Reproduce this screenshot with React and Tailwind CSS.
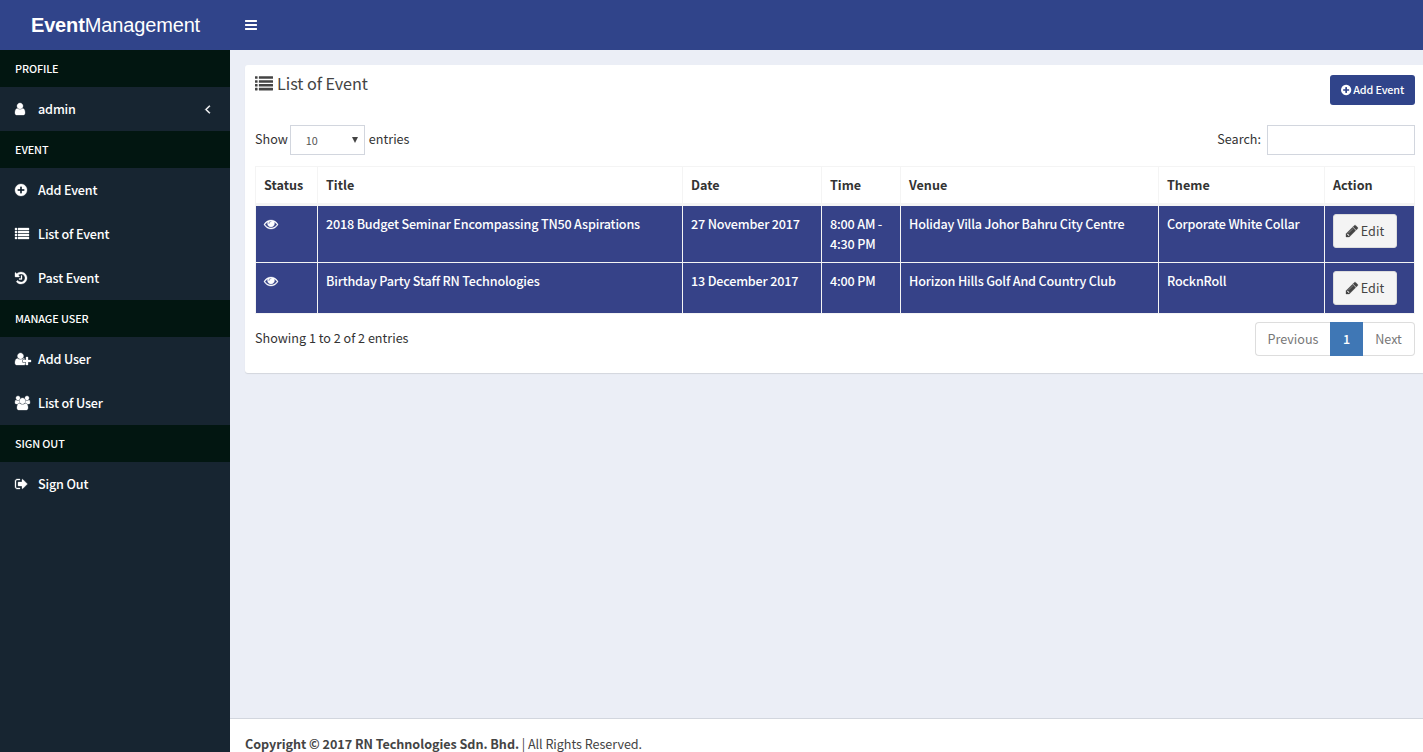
const GLYPHS = {
  user: { w: 1280, d: 'M1280 137q0 -109 -62.5 -187t-150.5 -78h-854q-88 0 -150.5 78t-62.5 187q0 85 8.5 160.5t31.5 152t58.5 131t94 89t134.5 34.5q131 -128 313 -128t313 128q76 0 134.5 -34.5t94 -89t58.5 -131t31.5 -152t8.5 -160.5zM1024 1024q0 -159 -112.5 -271.5t-271.5 -112.5t-271.5 112.5t-112.5 271.5t112.5 271.5t271.5 112.5t271.5 -112.5t112.5 -271.5z' },
  list: { w: 1792, d: 'M32 0h192q32 0 32 32v192q0 32 -32 32h-192q-32 0 -32 -32v-192q0 -32 32 -32zM32 384h192q32 0 32 32v192q0 32 -32 32h-192q-32 0 -32 -32v-192q0 -32 32 -32zM32 768h192q32 0 32 32v192q0 32 -32 32h-192q-32 0 -32 -32v-192q0 -32 32 -32zM32 1152h192q32 0 32 32v192q0 32 -32 32h-192q-32 0 -32 -32v-192q0 -32 32 -32zM416 0h1344q32 0 32 32v192q0 32 -32 32h-1344q-32 0 -32 -32v-192q0 -32 32 -32zM416 384h1344q32 0 32 32v192q0 32 -32 32h-1344q-32 0 -32 -32v-192q0 -32 32 -32zM416 768h1344q32 0 32 32v192q0 32 -32 32h-1344q-32 0 -32 -32v-192q0 -32 32 -32zM416 1152h1344q32 0 32 32v192q0 32 -32 32h-1344q-32 0 -32 -32v-192q0 -32 32 -32z' },
  plusCircle: { w: 1536, d: 'M1216 576v128q0 26 -19 45t-45 19h-256v256q0 26 -19 45t-45 19h-128q-26 0 -45 -19t-19 -45v-256h-256q-26 0 -45 -19t-19 -45v-128q0 -26 19 -45t45 -19h256v-256q0 -26 19 -45t45 -19h128q26 0 45 19t19 45v256h256q26 0 45 19t19 45zM1536 640q0 -209 -103 -385.5t-279.5 -279.5t-385.5 -103t-385.5 103t-279.5 279.5t-103 385.5t103 385.5t279.5 279.5t385.5 103t385.5 -103t279.5 -279.5t103 -385.5z' },
  history: { w: 1536, d: 'M1536 640q0 -156 -61 -298t-164 -245t-245 -164t-298 -61q-172 0 -327 72.5t-264 204.5q-7 10 -6.5 22.5t8.5 20.5l137 138q10 9 25 9q16 -2 23 -12q73 -95 179 -147t225 -52q104 0 198.5 40.5t163.5 109.5t109.5 163.5t40.5 198.5t-40.5 198.5t-109.5 163.5t-163.5 109.5t-198.5 40.5q-98 0 -188 -35.5t-160 -101.5l137 -138q31 -30 14 -69q-17 -40 -59 -40h-448q-26 0 -45 19t-19 45v448q0 42 40 59q39 17 69 -14l130 -129q107 101 244.5 156.5t284.5 55.5q156 0 298 -61t245 -164t164 -245t61 -298zM896 928v-448q0 -14 -9 -23t-23 -9h-320q-14 0 -23 9t-9 23v64q0 14 9 23t23 9h224v352q0 14 9 23t23 9h64q14 0 23 -9t9 -23z' },
  userPlus: { w: 2048, d: 'M704 640q-159 0 -271.5 112.5t-112.5 271.5t112.5 271.5t271.5 112.5t271.5 -112.5t112.5 -271.5t-112.5 -271.5t-271.5 -112.5zM1664 512h352q13 0 22.5 -9.5t9.5 -22.5v-192q0 -13 -9.5 -22.5t-22.5 -9.5h-352v-352q0 -13 -9.5 -22.5t-22.5 -9.5h-192q-13 0 -22.5 9.5t-9.5 22.5v352h-352q-13 0 -22.5 9.5t-9.5 22.5v192q0 13 9.5 22.5t22.5 9.5h352v352q0 13 9.5 22.5t22.5 9.5h192q13 0 22.5 -9.5t9.5 -22.5v-352zM928 288q0 -52 38 -90t90 -38h256v-238q-68 -50 -171 -50h-874q-121 0 -194 69t-73 190q0 53 3.5 103.5t14 109t26.5 108.5t43 97.5t62 81t85.5 53.5t111.5 20q19 0 39 -17q79 -61 154.5 -91.5t164.5 -30.5t164.5 30.5t154.5 91.5q20 17 39 17q132 0 217 -96h-223q-52 0 -90 -38t-38 -90v-192z' },
  users: { w: 1920, d: 'M593 640q-162 -5 -265 -128h-134q-82 0 -138 40.5t-56 118.5q0 353 124 353q6 0 43.5 -21t97.5 -42.5t119 -21.5q67 0 133 23q-5 -37 -5 -66q0 -139 81 -256zM1664 3q0 -120 -73 -189.5t-194 -69.5h-874q-121 0 -194 69.5t-73 189.5q0 53 3.5 103.5t14 109t26.5 108.5t43 97.5t62 81t85.5 53.5t111.5 20q10 0 43 -21.5t73 -48t107 -48t135 -21.5t135 21.5t107 48t73 48t43 21.5q61 0 111.5 -20t85.5 -53.5t62 -81t43 -97.5t26.5 -108.5t14 -109t3.5 -103.5zM640 1280q0 -106 -75 -181t-181 -75t-181 75t-75 181t75 181t181 75t181 -75t75 -181zM1344 896q0 -159 -112.5 -271.5t-271.5 -112.5t-271.5 112.5t-112.5 271.5t112.5 271.5t271.5 112.5t271.5 -112.5t112.5 -271.5zM1920 671q0 -78 -56 -118.5t-138 -40.5h-134q-103 123 -265 128q81 117 81 256q0 29 -5 66q66 -23 133 -23q59 0 119 21.5t97.5 42.5t43.5 21q124 0 124 -353zM1792 1280q0 -106 -75 -181t-181 -75t-181 75t-75 181t75 181t181 75t181 -75t75 -181z' },
  signOut: { w: 1664, d: 'M640 96q0 -4 1 -20t0.5 -26.5t-3 -23.5t-10 -19.5t-20.5 -6.5h-320q-119 0 -203.5 84.5t-84.5 203.5v704q0 119 84.5 203.5t203.5 84.5h320q13 0 22.5 -9.5t9.5 -22.5q0 -4 1 -20t0.5 -26.5t-3 -23.5t-10 -19.5t-20.5 -6.5h-320q-66 0 -113 -47t-47 -113v-704q0 -66 47 -113t113 -47h288h11h13t11.5 -1t11.5 -3t8 -5.5t7 -9t2 -13.5zM1568 640q0 -26 -19 -45l-544 -544q-19 -19 -45 -19t-45 19t-19 45v288h-448q-26 0 -45 19t-19 45v384q0 26 19 45t45 19h448v288q0 26 19 45t45 19t45 -19l544 -544q19 -19 19 -45z' },
  angleLeft: { w: 640, d: 'M627 992q0 -13 -10 -23l-393 -393l393 -393q10 -10 10 -23t-10 -23l-50 -50q-10 -10 -23 -10t-23 10l-466 466q-10 10 -10 23t10 23l466 466q10 10 23 10t23 -10l50 -50q10 -10 10 -23z' },
  bars: { w: 1536, d: 'M1536 192v-128q0 -26 -19 -45t-45 -19h-1408q-26 0 -45 19t-19 45v128q0 26 19 45t45 19h1408q26 0 45 -19t19 -45zM1536 704v-128q0 -26 -19 -45t-45 -19h-1408q-26 0 -45 19t-19 45v128q0 26 19 45t45 19h1408q26 0 45 -19t19 -45zM1536 1216v-128q0 -26 -19 -45t-45 -19h-1408q-26 0 -45 19t-19 45v128q0 26 19 45t45 19h1408q26 0 45 -19t19 -45z' },
  eye: { w: 1792, d: 'M1664 576q-152 236 -381 353q61 -104 61 -225q0 -185 -131.5 -316.5t-316.5 -131.5t-316.5 131.5t-131.5 316.5q0 121 61 225q-229 -117 -381 -353q133 -205 333.5 -326.5t434.5 -121.5t434.5 121.5t333.5 326.5zM944 960q0 20 -14 34t-34 14q-125 0 -214.5 -89.5t-89.5 -214.5q0 -20 14 -34t34 -14t34 14t14 34q0 86 61 147t147 61q20 0 34 14t14 34zM1792 576q0 -34 -20 -69q-140 -230 -376.5 -368.5t-499.5 -138.5t-499.5 139t-376.5 368q-20 35 -20 69t20 69q140 229 376.5 368t499.5 139t499.5 -139t376.5 -368q20 -35 20 -69z' },
  pencil: { w: 1536, d: 'M363 0l91 91l-235 235l-91 -91v-107h128v-128h107zM886 928q0 22 -22 22q-10 0 -17 -7l-542 -542q-7 -7 -7 -17q0 -22 22 -22q10 0 17 7l542 542q7 7 7 17zM832 1120l416 -416l-832 -832h-416v416zM1515 1024q0 -53 -37 -90l-166 -166l-416 416l166 165q36 38 90 38q53 0 91 -38l235 -234q37 -39 37 -91z' },
};

function Icon({ name, className = 'h-3.5' }) {
  const { w, d } = GLYPHS[name];
  return (
    <svg viewBox={`0 -1536 ${w} 1792`} className={`w-auto shrink-0 overflow-visible fill-current ${className}`} aria-hidden="true">
      <path transform="scale(1 -1)" d={d} />
    </svg>
  );
}

const MENU = [
  { title: 'PROFILE', items: [{ icon: 'user', label: 'admin', expandable: true }] },
  {
    title: 'EVENT',
    items: [
      { icon: 'plusCircle', label: 'Add Event' },
      { icon: 'list', label: 'List of Event' },
      { icon: 'history', label: 'Past Event' },
    ],
  },
  {
    title: 'MANAGE USER',
    items: [
      { icon: 'userPlus', label: 'Add User' },
      { icon: 'users', label: 'List of User' },
    ],
  },
  { title: 'SIGN OUT', items: [{ icon: 'signOut', label: 'Sign Out' }] },
];

const COLUMNS = [
  { label: 'Status', width: 'w-[62px]' },
  { label: 'Title', width: 'w-[365px]' },
  { label: 'Date', width: 'w-[139px]' },
  { label: 'Time', width: 'w-[79px]' },
  { label: 'Venue', width: 'w-[258px]' },
  { label: 'Theme', width: 'w-[166px]' },
  { label: 'Action', width: 'w-[89px]' },
];

const EVENTS = [
  {
    title: '2018 Budget Seminar Encompassing TN50 Aspirations',
    date: '27 November 2017',
    time: '8:00 AM - 4:30 PM',
    venue: 'Holiday Villa Johor Bahru City Centre',
    theme: 'Corporate White Collar',
  },
  {
    title: 'Birthday Party Staff RN Technologies',
    date: '13 December 2017',
    time: '4:00 PM',
    venue: 'Horizon Hills Golf And Country Club',
    theme: 'RocknRoll',
  },
];

function Sidebar() {
  return (
    <aside className="w-[230px] shrink-0 bg-[#172531] text-white">
      {MENU.map((section) => (
        <div key={section.title}>
          <div className="flex h-[37px] items-center bg-[#021611] px-[15px] pb-0.5 text-[10.8px] font-medium tracking-[-0.1px]">{section.title}</div>
          {section.items.map((item) => (
            <a key={item.label} className="flex h-11 items-center pr-5 pl-[15px] font-medium tracking-[-0.15px]">
              <span className="flex w-[23px] shrink-0">
                <Icon name={item.icon} className="h-3.5 stroke-current stroke-[40]" />
              </span>
              <span className="flex-1">{item.label}</span>
              {item.expandable && <Icon name="angleLeft" className="h-3.5 stroke-current stroke-[70]" />}
            </a>
          ))}
        </div>
      ))}
    </aside>
  );
}

function EventTable() {
  return (
    <table className="w-[1160px] table-fixed border-separate border-spacing-0 border border-[#f4f4f4]">
      <thead>
        <tr>
          {COLUMNS.map((c) => (
            <th key={c.label} className={`${c.width} h-[39px] border-r border-b-3 border-[#f4f4f4] px-2 py-0 text-left font-bold last:border-r-0`}>
              {c.label}
            </th>
          ))}
        </tr>
      </thead>
      <tbody className="bg-[#364288] font-medium tracking-[-0.18px] text-white [&_td]:border-r [&_td]:border-b [&_td]:border-[#f4f4f4] [&_td]:p-2 [&_td]:align-top [&_td:last-child]:border-r-0 [&_tr:last-child_td]:border-b-0">
        {EVENTS.map((e) => (
          <tr key={e.title}>
            <td>
              <Icon name="eye" className="mt-[3px] h-3.5 stroke-current stroke-[40]" />
            </td>
            <td>{e.title}</td>
            <td>{e.date}</td>
            <td>{e.time}</td>
            <td>{e.venue}</td>
            <td>{e.theme}</td>
            <td>
              <button className="flex h-[34px] w-16 items-center justify-center gap-[3px] rounded-[3px] border border-[#ddd] bg-[#f4f4f4] font-normal tracking-normal text-[#444]">
                <Icon name="pencil" className="h-3.5 stroke-current stroke-[40]" />
                Edit
              </button>
            </td>
          </tr>
        ))}
      </tbody>
    </table>
  );
}

export default function App() {
  return (
    <div className="flex h-[752px] flex-col overflow-hidden bg-[#ebeef6] font-['Noto_Sans_CJK_SC','Noto_Sans',sans-serif] text-[12.6px] leading-5 text-[#333]">
      <header className="flex h-[50px] shrink-0 items-center bg-[#30448a] text-white">
        <div className="w-[230px] pl-px text-center font-['Liberation_Sans',Arial,sans-serif] text-xl tracking-[-0.14px]">
          <b>Event</b>Management
        </div>
        <div className="pl-[15px]">
          <Icon name="bars" />
        </div>
      </header>
      <div className="flex min-h-0 flex-1">
        <Sidebar />
        <div className="flex min-w-0 flex-1 flex-col">
          <main className="flex-1 pt-[15px] pl-[15px]">
            <section className="h-[308px] rounded-[3px] rounded-r-none bg-white pt-2.5 pr-2 pl-2.5 shadow-[0_1px_1px_rgba(0,0,0,0.1)]">
              <div className="flex h-[50px] items-start justify-between">
                <h1 className="flex items-start gap-1 text-[16.2px] leading-4 tracking-[-0.05px] text-[#444]">
                  <Icon name="list" className="h-[18px]" />
                  List of Event
                </h1>
                <button className="flex h-[30px] w-[85px] justify-center gap-[2px] rounded-[3px] bg-[#30448a] pt-1 text-[10.8px] leading-5 font-medium tracking-[-0.14px] text-white">
                  <Icon name="plusCircle" className="mt-[5px] h-3" />
                  Add Event
                </button>
              </div>
              <div className="flex h-[41px] items-start justify-between">
                <label className="flex h-[30px] pt-1">
                  Show
                  <span className="-mt-1 mr-[4px] ml-[2px] flex h-[30px] w-[75px] items-center justify-between border border-[#d2d6de] pr-[6px] pl-[15px] text-[10.8px] text-[#555]">
                    10
                    <svg viewBox="0 0 6 6" className="h-1.5 w-1.5 fill-[#444]">
                      <path d="M0 0h6L3 6z" />
                    </svg>
                  </span>
                  entries
                </label>
                <label className="flex h-[30px] gap-1.5 pt-1">
                  Search:
                  <input className="-mt-1 h-[30px] w-[148px] border border-[#d2d6de] px-2.5" />
                </label>
              </div>
              <EventTable />
              <div className="mt-2 flex justify-between">
                <p className="pt-1.5">Showing 1 to 2 of 2 entries</p>
                <nav className="flex h-[34px] w-40 text-[#777]">
                  <a className="flex w-[75px] items-center justify-center rounded-l border border-r-0 border-[#ddd]">Previous</a>
                  <a className="flex w-[33px] items-center justify-center bg-[#3f77b5] font-medium text-white">1</a>
                  <a className="flex w-[52px] items-center justify-center rounded-r border border-l-0 border-[#ddd]">Next</a>
                </nav>
              </div>
            </section>
          </main>
          <footer className="h-[34px] shrink-0 border-t border-[#d2d6de] bg-white pt-[15px] pl-[15px] tracking-[-0.04px] whitespace-nowrap text-[#444]">
            <b>Copyright © 2017 RN Technologies Sdn. Bhd.</b> | All Rights Reserved.
          </footer>
        </div>
      </div>
    </div>
  );
}
